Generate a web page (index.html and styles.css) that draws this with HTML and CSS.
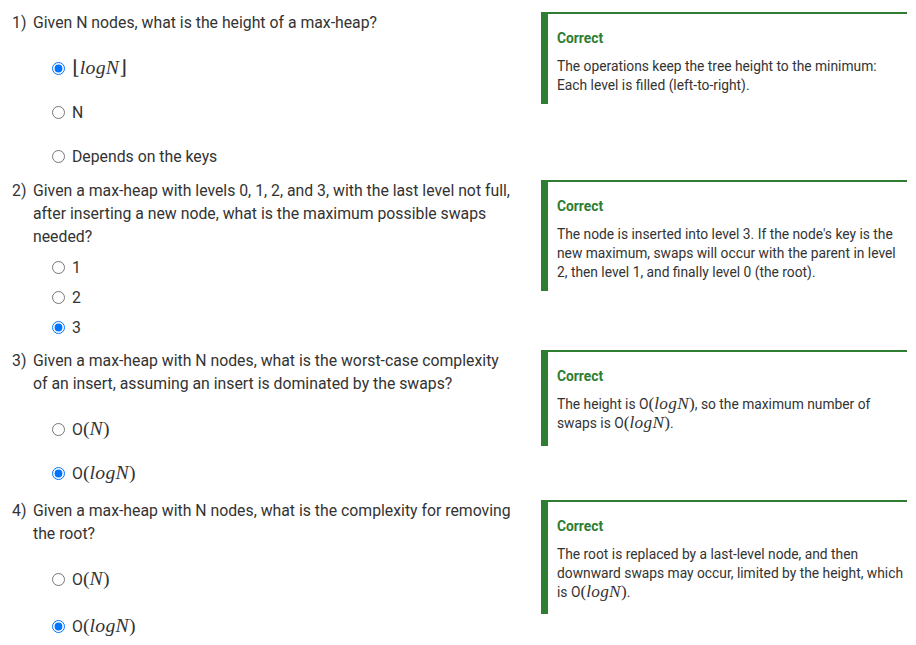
FILE: index.html
```html
<!DOCTYPE html>
<html>
<head>
<meta charset="utf-8">
<link rel="stylesheet" href="styles.css">
</head>
<body>
<div class="quiz">
  <div class="row r1">
    <div class="qcol">
      <div class="question"><span class="num">1)</span><span class="qtext">Given N nodes, what is the height of a max-heap?</span></div>
      <div class="options tall">
        <label class="opt"><input type="radio" name="q1" checked><span class="math"><span class="br">⌊</span><i>logN</i><span class="br">⌋</span></span></label>
        <label class="opt"><input type="radio" name="q1"><span>N</span></label>
        <label class="opt"><input type="radio" name="q1"><span>Depends on the keys</span></label>
      </div>
    </div>
    <div class="feedback">
      <div class="fb-title">Correct</div>
      <div class="fb-text">The operations keep the tree height to the minimum: Each level is filled (left-to-right).</div>
    </div>
  </div>

  <div class="row r2">
    <div class="qcol">
      <div class="question"><span class="num">2)</span><span class="qtext">Given a max-heap with levels 0, 1, 2, and 3, with the last level not full, after inserting a new node, what is the maximum possible swaps needed?</span></div>
      <div class="options short">
        <label class="opt"><input type="radio" name="q2"><span>1</span></label>
        <label class="opt"><input type="radio" name="q2"><span>2</span></label>
        <label class="opt"><input type="radio" name="q2" checked><span>3</span></label>
      </div>
    </div>
    <div class="feedback">
      <div class="fb-title">Correct</div>
      <div class="fb-text">The node is inserted into level 3. If the node's key is the new maximum, swaps will occur with the parent in level 2, then level 1, and finally level 0 (the root).</div>
    </div>
  </div>

  <div class="row r3">
    <div class="qcol">
      <div class="question"><span class="num">3)</span><span class="qtext">Given a max-heap with N nodes, what is the worst-case complexity of an insert, assuming an insert is dominated by the swaps?</span></div>
      <div class="options tall">
        <label class="opt"><input type="radio" name="q3"><span>O<span class="m">(<i>N</i>)</span></span></label>
        <label class="opt"><input type="radio" name="q3" checked><span>O<span class="m">(<i>logN</i>)</span></span></label>
      </div>
    </div>
    <div class="feedback">
      <div class="fb-title">Correct</div>
      <div class="fb-text">The height is O<span class="m">(<i>logN</i>)</span>, so the maximum number of swaps is O<span class="m">(<i>logN</i>)</span>.</div>
    </div>
  </div>

  <div class="row r4">
    <div class="qcol">
      <div class="question"><span class="num">4)</span><span class="qtext">Given a max-heap with N nodes, what is the complexity for removing the root?</span></div>
      <div class="options tall">
        <label class="opt"><input type="radio" name="q4"><span>O<span class="m">(<i>N</i>)</span></span></label>
        <label class="opt last"><input type="radio" name="q4" checked><span>O<span class="m">(<i>logN</i>)</span></span></label>
      </div>
    </div>
    <div class="feedback">
      <div class="fb-title">Correct</div>
      <div class="fb-text">The root is replaced by a last-level node, and then downward swaps may occur, limited by the height, which is O<span class="m">(<i>logN</i>)</span>.</div>
    </div>
  </div>
</div>
</body>
</html>
```

FILE: styles.css
```css
html, body {
  margin: 0;
  padding: 0;
  background: #ffffff;
}
body {
  font-family: Roboto, "Liberation Sans", sans-serif;
  color: #333333;
}
.quiz {
  padding: 11px 0 0 12px;
}
.row {
  display: grid;
  grid-template-columns: 529px 366px;
  align-items: start;
}
.r1 { height: 168px; }
.r2 { height: 170px; }
.r3 { height: 150px; }
.question {
  display: flex;
  font-size: 15.8px;
  line-height: 23px;
}
.num {
  width: 21px;
  flex: none;
}
.qtext {
  width: 482px;
}
.options {
  display: flex;
  flex-direction: column;
  padding-left: 40px;
  font-size: 15.8px;
}
.options.tall { margin-top: 12px; }
.options.short { margin-top: 4px; }
.opt {
  display: flex;
  align-items: center;
  gap: 7px;
}
.tall .opt { height: 44px; }
.short .opt { height: 30px; }
.tall .opt.last { height: 50px; }
.opt input {
  margin: 0;
  width: 13px;
  height: 13px;
}
.math {
  font-family: "Liberation Serif", "DejaVu Serif", serif;
  font-size: 1.25em;
  line-height: 1;
}
.m {
  font-family: "Liberation Serif", "DejaVu Serif", serif;
  font-size: 1.25em;
  line-height: 1;
}
.fb-text .m {
  line-height: 0.9;
}
.br {
  font-style: normal;
}
.math i, .m i {
  font-style: italic;
  letter-spacing: 0.3px;
}
.feedback {
  margin-top: 1px;
  border-top: 2px solid #2e7d32;
  border-left: 7px solid #2e7d32;
  padding: 15px 2px 9px 9px;
  font-size: 13.8px;
  line-height: 19px;
}
.r3 .feedback { padding-bottom: 13px; }
.r4 .feedback { padding-bottom: 12px; }
.fb-title {
  color: #2e7d32;
  font-weight: 700;
  margin-bottom: 9px;
}
.fb-text {
  color: #333333;
}
```
